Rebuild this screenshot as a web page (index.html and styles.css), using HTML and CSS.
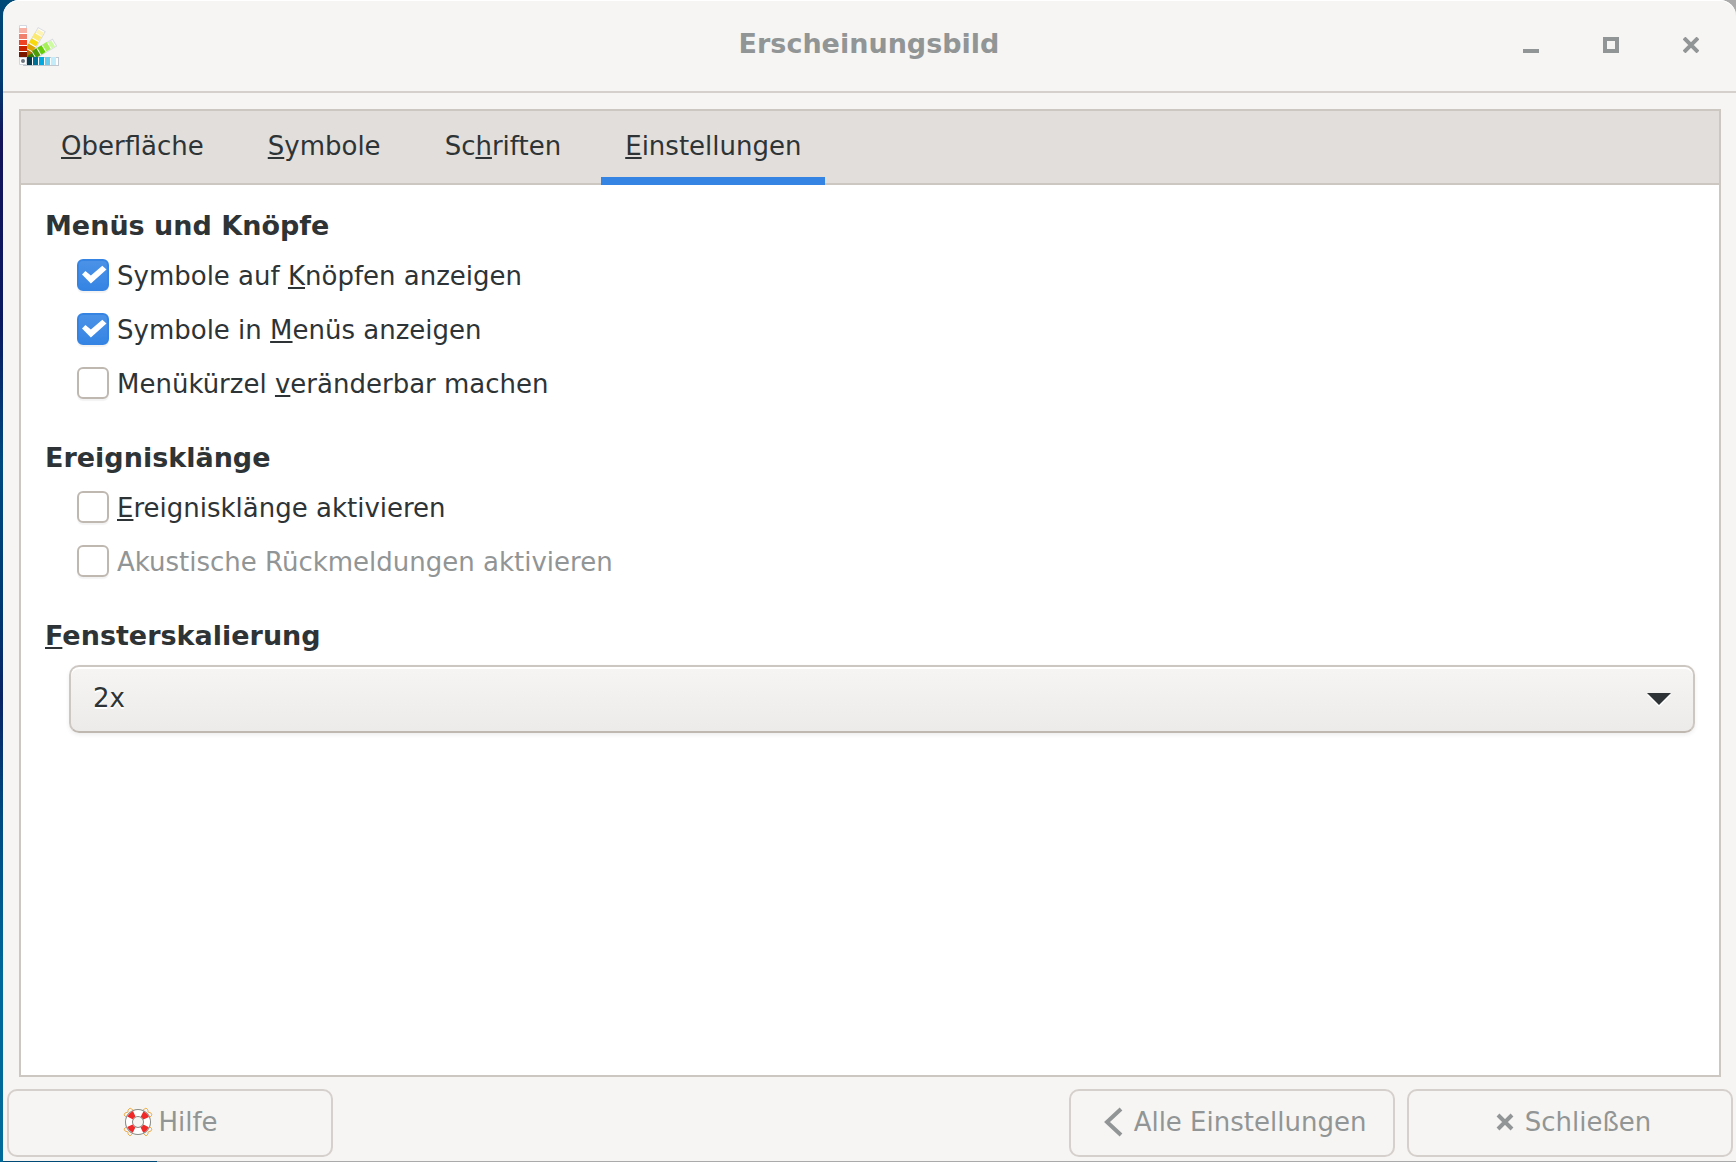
FILE: index.html
```html
<!DOCTYPE html>
<html lang="de">
<head>
    <meta charset="utf-8">
    <meta name="viewport" content="width=device-width, initial-scale=1">
    <title>Erscheinungsbild</title>
    <link rel="stylesheet" href="styles.css">
</head>
<body>
    <div class="window">
        <header class="titlebar">
            <svg class="app-icon" viewBox="0 0 40 41" aria-hidden="true">
                <!-- yellow fan -->
                <g transform="translate(4 36) rotate(-60)">
                    <rect x="3" y="-4" width="34" height="9" fill="#d9dcdf"/>
                    <rect x="3" y="-3" width="33" height="7" fill="#fff"/>
                    <rect x="6" y="-4" width="6" height="8" fill="#b56f05"/>
                    <rect x="13" y="-4" width="5" height="8" fill="#dca505"/>
                    <rect x="19" y="-4" width="5" height="8" fill="#f8d90c"/>
                    <rect x="25" y="-4" width="5" height="8" fill="#fce970"/>
                    <rect x="31" y="-3" width="4" height="7" fill="#fdf3b4"/>
                </g>
                <!-- green fan -->
                <g transform="translate(4 36) rotate(-31)">
                    <rect x="14" y="-4" width="23" height="9" fill="#d9dcdf"/>
                    <rect x="14" y="-3" width="22" height="7" fill="#fff"/>
                    <rect x="6" y="-2" width="6" height="7" fill="#2f7a05"/>
                    <rect x="13" y="-4" width="5" height="8" fill="#4e9a06"/>
                    <rect x="19" y="-4" width="5" height="8" fill="#66cc0a"/>
                    <rect x="25" y="-4" width="5" height="8" fill="#a5f058"/>
                    <rect x="31" y="-3" width="4" height="7" fill="#cdfca0"/>
                </g>
                <!-- blue fan -->
                <rect x="4" y="32" width="36" height="9" fill="#c2c8d0"/>
                <rect x="4" y="33" width="35" height="7" fill="#fff"/>
                <rect x="8" y="32" width="5" height="8" fill="#083a4c"/>
                <rect x="14" y="32" width="5" height="8" fill="#007095"/>
                <rect x="20" y="32" width="5" height="8" fill="#00a8df"/>
                <rect x="26" y="32" width="5" height="8" fill="#6bcdee"/>
                <rect x="32" y="32" width="5" height="8" fill="#c2ecfa"/>
                <!-- red fan -->
                <rect width="8" height="40" rx="1" fill="#d3d7df"/>
                <rect x="1" y="1" width="6" height="2" fill="#fff"/>
                <rect y="3" width="8" height="29" fill="#fff"/>
                <rect y="3" width="8" height="5" fill="#f7b2a5"/>
                <rect y="9" width="8" height="5" fill="#f0806c"/>
                <rect y="15" width="8" height="5" fill="#ee4423"/>
                <rect y="21" width="8" height="5" fill="#c82400"/>
                <rect y="27" width="8" height="5" fill="#7d1800"/>
                <rect x="1" y="33" width="6" height="6" fill="#fff"/>
                <circle cx="4" cy="36" r="2" fill="#6f7680"/>
            </svg>
            <h1 class="title">Erscheinungsbild</h1>
            <div class="controls">
                <button class="control" type="button" aria-label="Minimieren">
                    <svg viewBox="0 0 16 16"><path d="M0 12h16v4H0z" fill="currentColor"/></svg>
                </button>
                <button class="control" type="button" aria-label="Maximieren">
                    <svg viewBox="0 0 16 16"><path d="M2 2h12v12H2z" fill="none" stroke="currentColor" stroke-width="4"/></svg>
                </button>
                <button class="control" type="button" aria-label="Fenster schließen">
                    <svg viewBox="0 0 16 16"><path d="M1 1l14 14M15 1L1 15" stroke="currentColor" stroke-width="4"/></svg>
                </button>
            </div>
        </header>

        <main class="notebook">
            <nav class="tabs">
                <a class="tab" href="#oberflaeche"><u>O</u>berfläche</a>
                <a class="tab" href="#symbole"><u>S</u>ymbole</a>
                <a class="tab" href="#schriften">Sc<u>h</u>riften</a>
                <a class="tab active" href="#einstellungen"><u>E</u>instellungen</a>
            </nav>

            <div class="page" id="einstellungen">
                <section class="group">
                    <h2>Menüs und Knöpfe</h2>
                    <label class="check"><input type="checkbox" checked><span>Symbole auf <u>K</u>nöpfen anzeigen</span></label>
                    <label class="check"><input type="checkbox" checked><span>Symbole in <u>M</u>enüs anzeigen</span></label>
                    <label class="check"><input type="checkbox"><span>Menükürzel <u>v</u>eränderbar machen</span></label>
                </section>

                <section class="group">
                    <h2>Ereignisklänge</h2>
                    <label class="check"><input type="checkbox"><span><u>E</u>reignisklänge aktivieren</span></label>
                    <label class="check"><input type="checkbox" disabled><span>Akustische Rückmeldungen aktivieren</span></label>
                </section>

                <section class="group">
                    <h2><label for="scale"><u>F</u>ensterskalierung</label></h2>
                    <div class="combo">
                        <select id="scale">
                            <option>1x</option>
                            <option selected>2x</option>
                        </select>
                        <svg class="arrow" viewBox="0 0 24 14" aria-hidden="true">
                            <path d="M0 2h24L12 14z" fill="#fff"/>
                            <path d="M0 0h24L12 12z" fill="#2e3436"/>
                        </svg>
                    </div>
                </section>
            </div>
        </main>

        <footer class="actions">
            <button class="button help" type="button">
                <svg viewBox="0 0 32 32" aria-hidden="true">
                    <g fill="none" stroke="#f0b050" stroke-width="1">
                        <path d="M11 4L8 2 6 4v2L3 7 2 9l3 3M21 4l3-2 2 2v2l3 1 1 2-3 3"/>
                        <path d="M11 27l-3 3-2-2v-2l-3-1-1-2 3-3M21 27l3 3 2-2v-2l3-1 1-2-3-3"/>
                    </g>
                    <circle cx="16" cy="16" r="9" fill="none" stroke="#888a85" stroke-width="8"/>
                    <circle cx="16" cy="16" r="9" fill="none" stroke="#fff" stroke-width="6"/>
                    <circle cx="16" cy="16" r="9" fill="none" stroke="#ef2929" stroke-width="6" stroke-dasharray="6 8.137" stroke-dashoffset="-4"/>
                </svg>
                Hilfe
            </button>
            <button class="button" type="button">
                <svg viewBox="0 0 32 32" aria-hidden="true"><path d="M23 3L9 16l14 13" fill="none" stroke="currentColor" stroke-width="4"/></svg>
                Alle Einstellungen
            </button>
            <button class="button" type="button">
                <svg viewBox="0 0 32 32" aria-hidden="true"><path d="M9 9l14 14M23 9L9 23" stroke="currentColor" stroke-width="4"/></svg>
                Schließen
            </button>
        </footer>
    </div>
</body>
</html>
```

FILE: styles.css
```css
* {
    box-sizing: border-box;
}
body {
    margin: 0;
    min-height: 100vh;
    display: flex;
    padding: 0 0 1px 3px;
    background:
        linear-gradient(#004a78, #003a70 7%, #14145a 12%, #0a1a60 28%, #004a80 40%, #003a72 52%, #0a2464 60%, #004a80 70%, #00689a 84%, #006a9a) left / 3px 100% no-repeat,
        linear-gradient(90deg, #004a78 157px, #aaa 157px);
    color: #2e3436;
    font: 26px/32px "DejaVu Sans", sans-serif;
}
u {
    text-decoration: underline;
    text-decoration-thickness: 2px;
    text-underline-offset: 2px;
    text-decoration-skip-ink: none;
}
svg {
    display: block;
}
.window {
    flex: 1;
    display: flex;
    flex-direction: column;
    background: #f6f5f3;
    border-radius: 16px 16px 0 0;
    box-shadow: inset 0 1px #fff;
}
.titlebar {
    display: grid;
    grid-template-columns: 1fr auto 1fr;
    align-items: center;
    height: 93px;
    padding: 0 21px 0 16px;
    border-bottom: 2px solid #d5d0cc;
    color: #929595;
}
.app-icon {
    width: 40px;
    height: 41px;
}
.title {
    margin: 0;
    padding: 0 0 4px 4px;
    font-size: 27px;
}
.controls {
    display: flex;
    justify-content: flex-end;
    gap: 32px;
    padding-bottom: 2px;
}
.control {
    width: 48px;
    height: 48px;
    padding: 16px;
    border: none;
    background: none;
    color: inherit;
}
.control svg {
    width: 16px;
    height: 16px;
}
.notebook {
    flex: 1;
    display: flex;
    flex-direction: column;
    margin: 16px 15px 12px 16px;
    border: 2px solid #cdc7c2;
    background: #fff;
}
.tabs {
    display: flex;
    gap: 16px;
    height: 74px;
    padding: 0 16px;
    background: #e1dedb;
    box-shadow: inset 0 -2px #cdc7c2;
}
.tab {
    padding: 19px 24px 0;
    color: inherit;
    text-decoration: none;
}
.tab.active {
    border-bottom: 8px solid #3584e4;
}
.page {
    flex: 1;
    display: flex;
    flex-direction: column;
    gap: 32px;
    padding: 25px 24px 24px;
}
.group h2 {
    margin: 0 0 6px;
    font-size: 27px;
}
.check {
    display: flex;
    align-items: center;
    gap: 8px;
    width: fit-content;
    height: 54px;
    margin-left: 32px;
}
.check span {
    padding-top: 2px;
}
.check input {
    appearance: none;
    display: grid;
    place-items: center;
    width: 32px;
    height: 32px;
    margin: 0;
    border: 2px solid #bfb8b1;
    border-radius: 6px;
    background: #fff;
    box-shadow: 0 2px 1px rgba(0, 0, 0, 0.05);
}
.check input:checked {
    border-color: #3584e4;
    background: linear-gradient(#4b92e7, #3584e4);
}
.check input:checked::before {
    content: "";
    width: 26px;
    height: 20px;
    margin-left: 2px;
    background: #fff;
    clip-path: polygon(4% 47%, 17% 30%, 38% 52%, 82% 4%, 98% 22%, 38% 92%);
}
.check input:disabled + span {
    color: #929595;
}
.combo {
    position: relative;
    margin: 13px 0 0 24px;
}
.combo select {
    appearance: none;
    display: block;
    width: 100%;
    height: 68px;
    padding: 0 22px 2px;
    border: 2px solid #cdc7c2;
    border-bottom-color: #bfb8b1;
    border-radius: 10px;
    background: linear-gradient(#f6f5f4, #edebe9);
    box-shadow: inset 0 2px #fff, 0 2px 4px rgba(0, 0, 0, 0.07);
    color: inherit;
    font: inherit;
    text-shadow: 0 2px #fff;
}
.arrow {
    position: absolute;
    top: 28px;
    right: 24px;
    width: 24px;
    height: 14px;
    pointer-events: none;
}
.actions {
    display: flex;
    gap: 12px;
    padding: 0 3px 4px 4px;
}
.button {
    display: flex;
    align-items: center;
    justify-content: center;
    gap: 4px;
    width: 326px;
    height: 68px;
    padding: 0 0 2px;
    border: 2px solid #d5d0cc;
    border-radius: 10px;
    background: none;
    color: #929595;
    font: inherit;
}
.button svg {
    width: 32px;
    height: 32px;
}
.help {
    margin-right: auto;
}
```
